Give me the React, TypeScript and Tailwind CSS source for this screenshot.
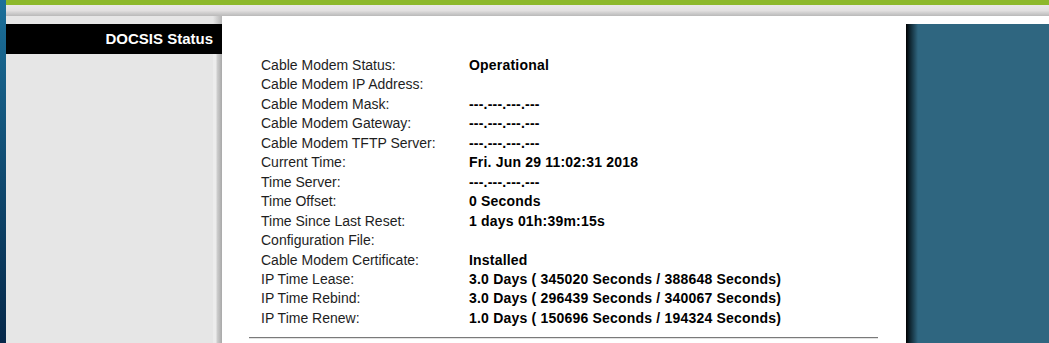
import React from "react";

const rows: [string, string][] = [
  ["Cable Modem Status:", "Operational"],
  ["Cable Modem IP Address:", ""],
  ["Cable Modem Mask:", "---.---.---.---"],
  ["Cable Modem Gateway:", "---.---.---.---"],
  ["Cable Modem TFTP Server:", "---.---.---.---"],
  ["Current Time:", "Fri. Jun 29 11:02:31 2018"],
  ["Time Server:", "---.---.---.---"],
  ["Time Offset:", "0 Seconds"],
  ["Time Since Last Reset:", "1 days 01h:39m:15s"],
  ["Configuration File:", ""],
  ["Cable Modem Certificate:", "Installed"],
  ["IP Time Lease:", "3.0 Days ( 345020 Seconds / 388648 Seconds)"],
  ["IP Time Rebind:", "3.0 Days ( 296439 Seconds / 340067 Seconds)"],
  ["IP Time Renew:", "1.0 Days ( 150696 Seconds / 194324 Seconds)"],
];

const App: React.FC = () => {
  return (
    <div className="flex w-[1049px] h-[343px] overflow-hidden bg-white font-['Liberation_Sans',Arial,sans-serif]">
      {/* left edge strip */}
      <div className="w-[6px] shrink-0 bg-gradient-to-b from-[#1c709a] to-[#06284a]" />

      <div className="flex-1 flex flex-col">
        <div className="h-[5px] bg-[#8db82b]" />
        <div className="h-[11px] bg-gradient-to-b from-[#e9e7e7] via-[#e2e0e0] to-[#b9b9b9]" />

        <div className="flex-1 flex">
          {/* left nav column */}
          <div className="w-[216px] shrink-0 flex flex-col bg-[#e6e6e6]">
            <div className="h-[8px] flex justify-end">
              <div className="w-[9px] bg-gradient-to-r from-[#e6e6e6] to-[#b5b5b5]" />
            </div>
            <div className="h-[30px] bg-black flex items-center justify-end pr-[9px] text-white font-bold text-[15px]">
              DOCSIS Status
            </div>
            <div className="flex-1 flex justify-end">
              <div className="w-[9px] bg-[linear-gradient(to_right,#ececec_0px,#ececec_3px,#cfcfcf_4px,#a8a8a8_9px)]" />
            </div>
          </div>

          {/* main panel */}
          <div className="w-[684px] shrink-0 flex flex-col">
            <div className="pt-[40px] pl-[39px]">
              {rows.map(([label, value]) => (
                <div key={label} className="flex text-[14px] leading-[19.45px]">
                  <div className="w-[208px] text-[#1e1e1e]">{label}</div>
                  <div className="font-bold text-black tracking-[0.2px]">{value}</div>
                </div>
              ))}
            </div>
            <div className="ml-[27px] w-[629px] mt-[9px] border-t border-[#7a7a7a] border-b border-b-[#e2e2e2]" />
          </div>

          {/* right column */}
          <div className="flex-1 flex flex-col">
            <div className="h-[8px]" />
            <div className="flex-1 bg-[linear-gradient(to_right,#000000_0px,#0b1d26_3px,#2f6680_12px,#2f6680_100%)]" />
          </div>
        </div>
      </div>
    </div>
  );
};

export default App;
